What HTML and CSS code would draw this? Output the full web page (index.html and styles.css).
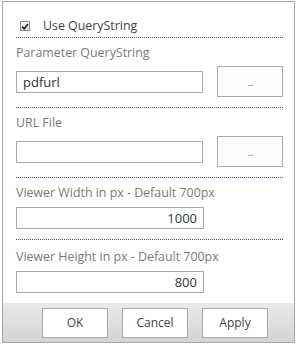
FILE: index.html
```html
<!DOCTYPE html>
<html>
<head>
<meta charset="utf-8">
<link rel="stylesheet" href="styles.css">
</head>
<body>
<div class="panel">
  <div class="content">
    <div class="section sec-check">
      <label class="check-row">
        <span class="checkbox">
          <svg width="9" height="9" viewBox="0 0 9 9"><path d="M1.2 4.6 L3.6 7 L7.8 1.6" fill="none" stroke="#222" stroke-width="1.8"/></svg>
        </span>
        <span class="check-text">Use QueryString</span>
      </label>
    </div>
    <div class="section sec-pick">
      <div class="label">Parameter QueryString</div>
      <div class="row">
        <div class="input">pdfurl</div>
        <div class="btn-dots">...</div>
      </div>
    </div>
    <div class="section sec-pick">
      <div class="label">URL File</div>
      <div class="row">
        <div class="input"></div>
        <div class="btn-dots">...</div>
      </div>
    </div>
    <div class="section sec-num">
      <div class="label">Viewer Width in px - Default 700px</div>
      <div class="input num">1000</div>
    </div>
    <div class="section sec-num last">
      <div class="label">Viewer Height in px - Default 700px</div>
      <div class="input num">800</div>
    </div>
  </div>
  <div class="footer">
    <div class="btn">OK</div>
    <div class="btn">Cancel</div>
    <div class="btn">Apply</div>
  </div>
</div>
</body>
</html>
```
FILE: styles.css
```css
* { box-sizing: border-box; }
body {
  margin: 0;
  background: #fff;
  font-family: "Open Sans", "Noto Sans", sans-serif;
  font-size: 12.4px;
  color: #444;
}
.panel {
  margin: 1px 0 0 2px;
  width: 293px;
  height: 342px;
  border: 1px solid #a6a6a6;
  display: flex;
  flex-direction: column;
}
.content {
  padding: 0 11px 0 13px;
  flex: 1;
}
.section {
  border-bottom: 1px dotted #3657c0;
}
.section.last { border-bottom: none; }
.sec-check {
  height: 36px;
  display: flex;
  align-items: flex-start;
  padding-left: 4px;
  padding-top: 16px;
}
.check-row {
  display: flex;
  align-items: center;
  gap: 13px;
}
.checkbox {
  width: 10px;
  height: 10px;
  border: 1px solid #8c8c8c;
  background: linear-gradient(#f4f4f4, #d8d8d8);
  display: flex;
  align-items: center;
  justify-content: center;
}
.check-text {
  color: #444;
  line-height: 16px;
}
.label {
  color: #7a7a7a;
  line-height: 16px;
  white-space: nowrap;
}
.sec-pick {
  height: 70px;
  padding-top: 7px;
}
.row {
  margin-top: 5px;
  display: flex;
  align-items: center;
  gap: 14px;
}
.input {
  width: 188px;
  height: 22px;
  border: 1px solid #ababab;
  background: #fff;
  padding: 0 6px;
  line-height: 20px;
  color: #333;
  font-size: 13px;
}
.num { text-align: right; margin-top: 6px; }
.btn-dots {
  width: 66px;
  height: 31px;
  border: 1px solid #ababab;
  background: #fcfcfc;
  text-align: center;
  font-size: 9px;
  line-height: 31px;
  color: #666;
  letter-spacing: -0.5px;
}
.sec-num {
  height: 62px;
  padding-top: 7px;
}
.sec-num.last {
  height: 63px;
  padding-top: 9px;
}
.footer {
  height: 39px;
  background: linear-gradient(#e9e9e9, #d3d3d3);
  display: flex;
  align-items: center;
  padding-left: 39px;
  gap: 14px;
}
.btn {
  width: 66px;
  height: 30px;
  border: 1px solid #a9a9a9;
  background: #fff;
  text-align: center;
  line-height: 28px;
  font-size: 12px;
  color: #444;
}
```
